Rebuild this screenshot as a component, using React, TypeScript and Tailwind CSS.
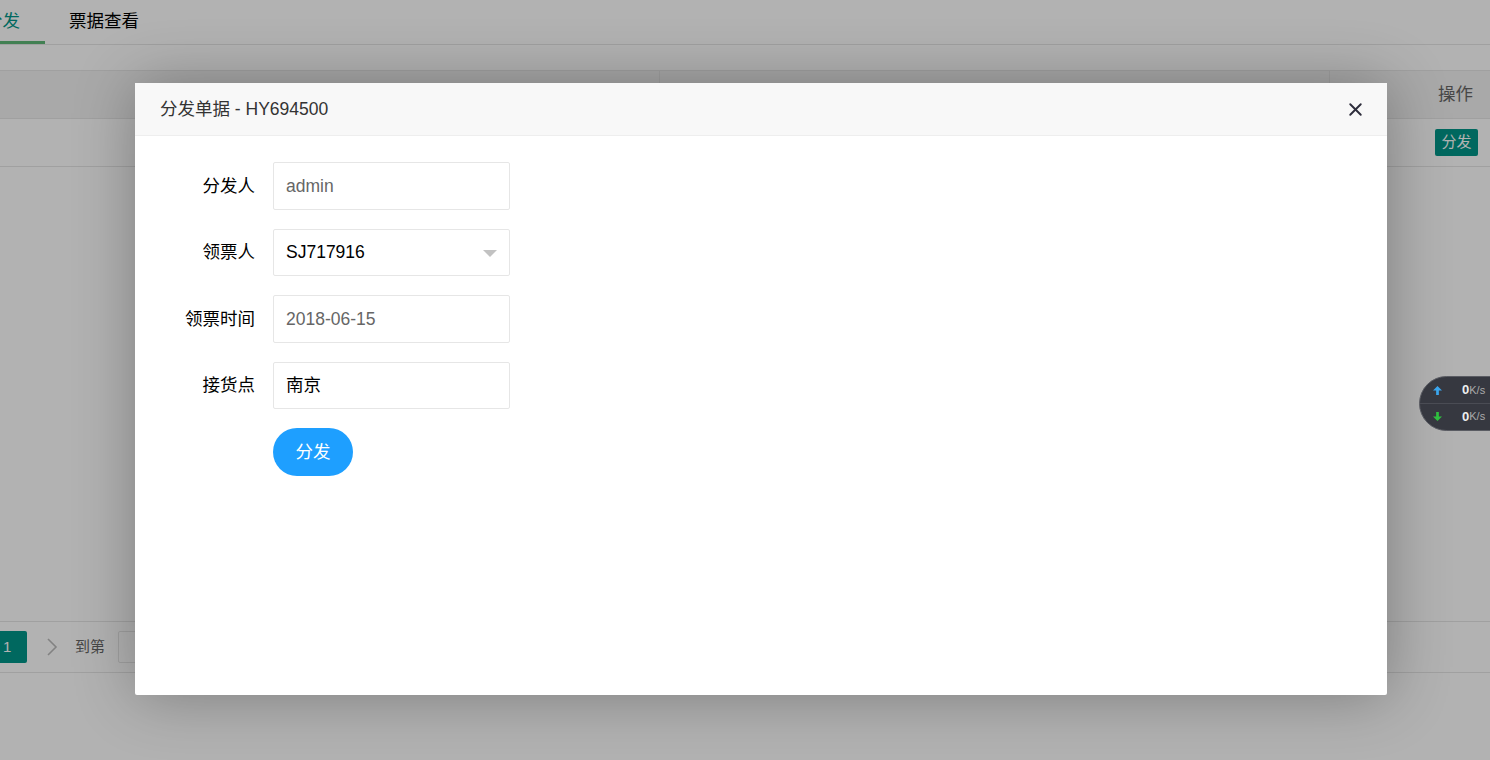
import { X } from "lucide-react"

const font = { fontFamily: '"Liberation Sans", "Noto Sans CJK SC", sans-serif' }

function Page() {
  return (
    <div className="w-full h-[760px] bg-white overflow-hidden">
      {/* tabs */}
      <div className="h-[45px] border-b border-[#e6e6e6] flex items-end">
        <div className="-ml-[15px] h-full flex items-center pr-[25px] border-b-[3px] border-[#5fb878] pt-[1px]">
          <span className="text-[17.5px] text-[#009688]">分发</span>
        </div>
        <div className="h-full flex items-center pl-[24px] pr-[24px] pb-[2px]">
          <span className="text-[17.5px] text-black">票据查看</span>
        </div>
      </div>
      <div className="h-[25px]" />
      {/* table */}
      <div className="border-t border-[#e6e6e6]">
        <div className="flex h-[48px] bg-[#f2f2f2] border-b border-[#e6e6e6] text-[17.5px] text-[#666]">
          <div className="w-[660px] border-r border-[#e6e6e6]" />
          <div className="w-[670px] border-r border-[#e6e6e6]" />
          <div className="flex-1 flex items-center pl-[108px]">操作</div>
        </div>
        <div className="flex h-[48px] border-b border-[#e6e6e6]">
          <div className="w-[660px] border-r border-[#e6e6e6]" />
          <div className="w-[670px] border-r border-[#e6e6e6]" />
          <div className="flex-1 flex items-center pl-[105px]">
            <div className="h-[27px] w-[43px] rounded-[2px] bg-[#009688] text-white text-[15px] flex items-center justify-center">分发</div>
          </div>
        </div>
      </div>
      <div className="h-[454px]" />
      {/* pager */}
      <div className="border-t border-b border-[#e6e6e6] h-[52px] flex items-center">
        <div className="h-[32px] w-[27px] bg-[#009688] rounded-r-[2px] text-white text-[15px] flex items-center pl-[3px]">1</div>
        <svg width="12" height="18" viewBox="0 0 12 18" className="ml-[19px]">
          <path d="M2 1 L10 9 L2 17" fill="none" stroke="#bbb" strokeWidth="1.6" />
        </svg>
        <span className="ml-[17px] text-[15px] text-[#666]">到第</span>
        <div className="ml-[13px] h-[32px] w-[60px] border border-[#e6e6e6] rounded-[2px]" />
      </div>
    </div>
  )
}

function Field({ label, children }: { label: string; children: React.ReactNode }) {
  return (
    <div className="flex items-center">
      <div className="w-[138px] pr-[18px] text-right text-[17.5px] text-black">{label}</div>
      <div className="relative h-[47.5px] w-[237px] border border-[#e6e6e6] rounded-[2px] bg-white flex items-center pl-[12px] text-[17.5px]">
        {children}
      </div>
    </div>
  )
}

function Dialog() {
  return (
    <div className="absolute left-[135px] top-[83px] w-[1252px] h-[612px] bg-white rounded-[2px] shadow-[1px_1px_62px_rgba(0,0,0,0.3)]">
      <div className="h-[53px] bg-[#f8f8f8] border-b border-[#eee] flex items-center pl-[25px] pr-[20px] justify-between">
        <span className="text-[17.5px] text-[#333]">分发单据 - HY694500</span>
        <X size={21} strokeWidth={2.2} className="text-[#2e2d3c] mr-[1px]" />
      </div>
      <div className="pt-[26px] flex flex-col gap-[19px]">
        <Field label="分发人"><span className="text-[#666]">admin</span></Field>
        <Field label="领票人">
          <span className="text-black">SJ717916</span>
          <div className="absolute right-[12px] top-[20px] w-0 h-0 border-l-[7.5px] border-r-[7.5px] border-t-[7.5px] border-l-transparent border-r-transparent border-t-[#c2c2c2]" />
        </Field>
        <Field label="领票时间"><span className="text-[#666]">2018-06-15</span></Field>
        <Field label="接货点"><span className="text-black">南京</span></Field>
        <div className="pl-[138px]">
          <button className="h-[48px] w-[80px] rounded-full bg-[#1e9fff] text-white text-[17.5px]">分发</button>
        </div>
      </div>
    </div>
  )
}

function NetSpeed() {
  return (
    <div className="absolute left-[1419px] top-[376px] w-[80px] h-[55px] rounded-l-full bg-[#363840] border border-[#5a5c63] flex flex-col justify-center">
      <div className="flex items-center h-[26px] border-b border-[#4a4c54] pl-[13px]">
        <svg width="9" height="9" viewBox="0 0 10 10">
          <path d="M5 0 L10 5 L6.5 5 L6.5 10 L3.5 10 L3.5 5 L0 5 Z" fill="#3aa6ee" />
        </svg>
        <span className="ml-[20px] text-[13px] font-bold text-[#eee]">0</span>
        <span className="text-[11px] text-[#aaa]">K/s</span>
      </div>
      <div className="flex items-center h-[26px] pl-[13px]">
        <svg width="9" height="9" viewBox="0 0 10 10">
          <path d="M5 10 L10 5 L6.5 5 L6.5 0 L3.5 0 L3.5 5 L0 5 Z" fill="#2fbf3f" />
        </svg>
        <span className="ml-[20px] text-[13px] font-bold text-[#eee]">0</span>
        <span className="text-[11px] text-[#aaa]">K/s</span>
      </div>
    </div>
  )
}

export default function App() {
  return (
    <main className="relative w-[1490px] h-[760px] overflow-hidden" style={font}>
      <Page />
      <div className="absolute inset-0 bg-black/30" />
      <Dialog />
      <NetSpeed />
    </main>
  )
}
